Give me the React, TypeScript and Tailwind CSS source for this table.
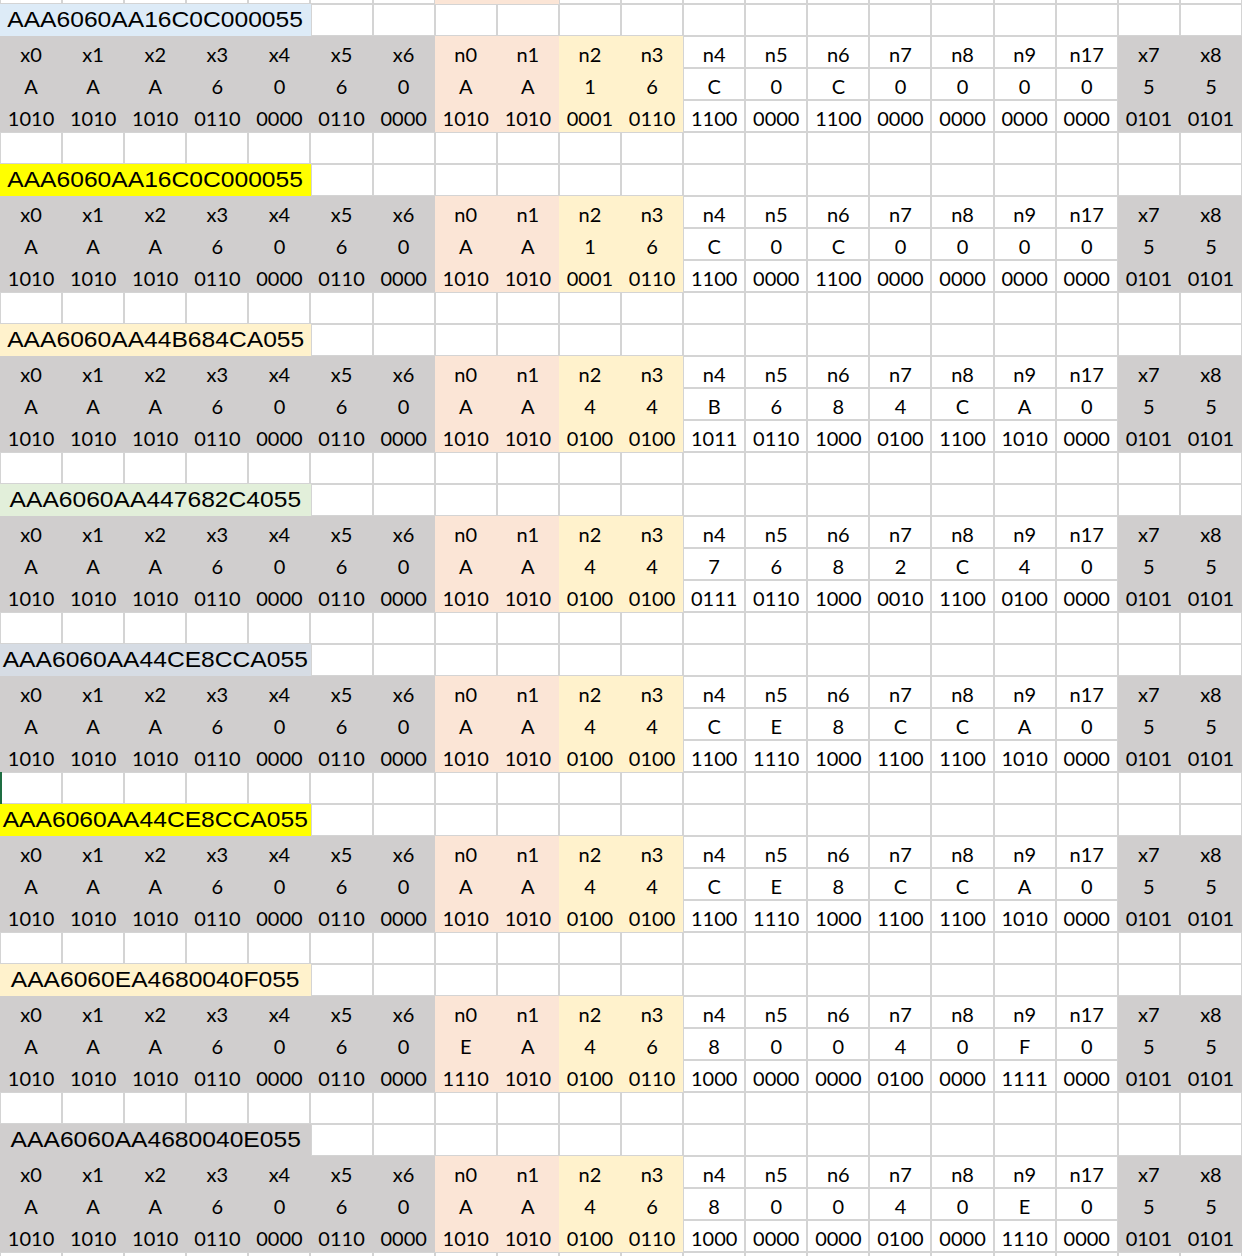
import { clsx } from 'clsx'
import type { ReactNode } from 'react'

const HEADERS = ['x0', 'x1', 'x2', 'x3', 'x4', 'x5', 'x6', 'n0', 'n1', 'n2', 'n3', 'n4', 'n5', 'n6', 'n7', 'n8', 'n9', 'n17', 'x7', 'x8']

interface Group {
  title: string
  titleFill: string
  n: string // n0..n9, n17
}

const GROUPS: Group[] = [
  { title: 'AAA6060AA16C0C000055', titleFill: 'bg-[#ddebf7]', n: 'AA16C0C0000' },
  { title: 'AAA6060AA16C0C000055', titleFill: 'bg-[#ffff00]', n: 'AA16C0C0000' },
  { title: 'AAA6060AA44B684CA055', titleFill: 'bg-[#fff2cc]', n: 'AA44B684CA0' },
  { title: 'AAA6060AA447682C4055', titleFill: 'bg-[#e2efda]', n: 'AA447682C40' },
  { title: 'AAA6060AA44CE8CCA055', titleFill: 'bg-[#d6dce4]', n: 'AA44CE8CCA0' },
  { title: 'AAA6060AA44CE8CCA055', titleFill: 'bg-[#ffff00]', n: 'AA44CE8CCA0' },
  { title: 'AAA6060EA4680040F055', titleFill: 'bg-[#fff2cc]', n: 'EA4680040F0' },
  { title: 'AAA6060AA4680040E055', titleFill: 'bg-[#d0cece]', n: 'AA4680040E0' },
]

// column fills: x cols gray, n0-n1 pink, n2-n3 cream, rest plain
const colFill = (i: number) => {
  if (i < 7 || i > 17) return 'bg-[#d0cece]'
  if (i < 9) return 'bg-[#fbe5d6]'
  if (i < 11) return 'bg-[#fff2cc]'
  return null
}

const toBin = (h: string) => parseInt(h, 16).toString(2).padStart(4, '0')

const Cell = ({ fill, children, className }: { fill?: string | null; children?: ReactNode; className?: string }) => (
  <div
    className={clsx(
      'h-8 flex justify-center pt-[4px] leading-[28px] whitespace-nowrap',
      fill ?? 'shadow-[inset_0_0_0_1px_#d4d4d4]',
      className,
    )}
  >
    {children}
  </div>
)

const Row = ({ children }: { children: ReactNode }) => <div className="grid grid-cols-20">{children}</div>

const BlankRow = ({ fills, mark }: { fills?: Record<number, string>; mark?: boolean }) => (
  <Row>
    {HEADERS.map((h, i) => (
      <Cell
        key={h}
        fill={fills?.[i]}
        className={clsx(mark && i === 0 && 'shadow-[inset_2px_0_0_#1e6e42,inset_0_0_0_1px_#d4d4d4]')}
      />
    ))}
  </Row>
)

const GroupBlock = ({ group, mark }: { group: Group; mark?: boolean }) => {
  const values = ('AAA6060' + group.n + '55').split('')
  return (
    <>
      <Row>
        <div className={clsx('col-span-5 h-8 flex justify-center overflow-visible', group.titleFill)}>
          <span className="inline-block scale-x-[1.145] font-['Liberation_Sans',Arial,sans-serif] text-[21.5px] leading-[32px] whitespace-nowrap">
            {group.title}
          </span>
        </div>
        {HEADERS.slice(5).map((h) => (
          <Cell key={h} />
        ))}
      </Row>
      <Row>
        {HEADERS.map((h, i) => (
          <Cell key={h} fill={colFill(i)}>
            {h}
          </Cell>
        ))}
      </Row>
      <Row>
        {values.map((v, i) => (
          <Cell key={HEADERS[i]} fill={colFill(i)}>
            {v}
          </Cell>
        ))}
      </Row>
      <Row>
        {values.map((v, i) => (
          <Cell key={HEADERS[i]} fill={colFill(i)}>
            {toBin(v)}
          </Cell>
        ))}
      </Row>
      <BlankRow mark={mark} />
    </>
  )
}

export default function App() {
  return (
    <div className="w-[1242px] h-[1256px] overflow-hidden bg-white text-black font-[Lato,sans-serif] text-[20px]">
      {/* sliver of the row above, only its bottom edge shows */}
      <div className="h-[4px] overflow-hidden flex flex-col justify-end">
        <BlankRow fills={{ 7: 'bg-[#fbe5d6]', 8: 'bg-[#fbe5d6]' }} />
      </div>
      {GROUPS.map((g, i) => (
        <GroupBlock key={i} group={g} mark={i === 4} />
      ))}
    </div>
  )
}
